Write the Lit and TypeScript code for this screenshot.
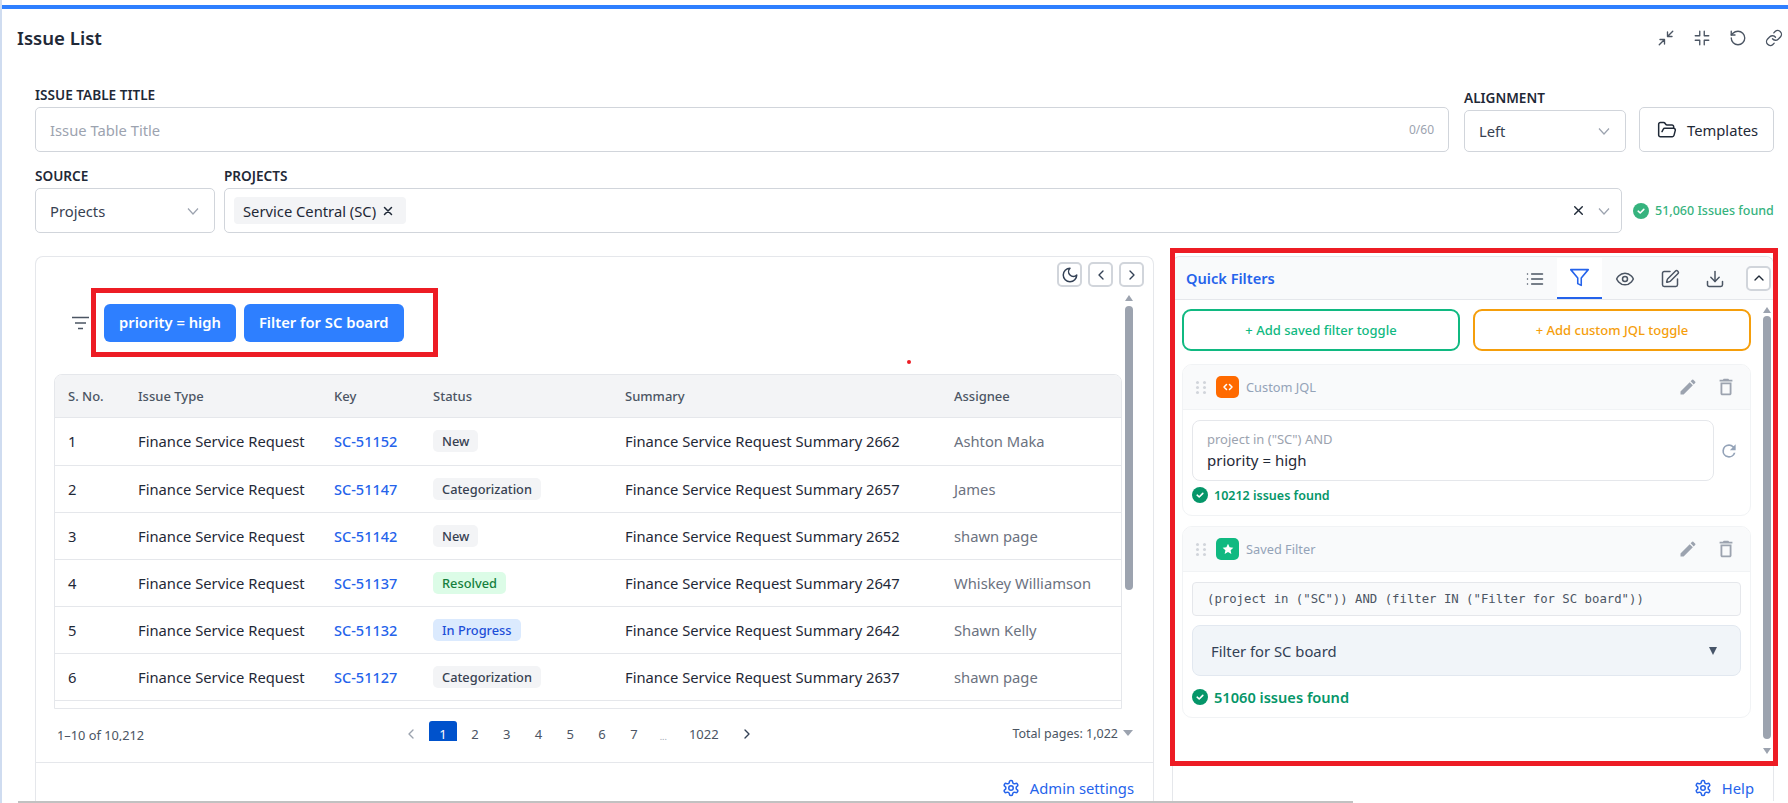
import { LitElement, html, css, svg } from 'lit';
import { customElement } from 'lit/decorators.js';

type Status = 'new' | 'cat' | 'res' | 'prog';

interface Row {
  type: string;
  key: string;
  status: string;
  kind: Status;
  summary: string;
  assignee: string;
}

const ROWS: Row[] = [
  { type: 'Finance Service Request', key: 'SC-51152', status: 'New', kind: 'new', summary: 'Finance Service Request Summary 2662', assignee: 'Ashton Maka' },
  { type: 'Finance Service Request', key: 'SC-51147', status: 'Categorization', kind: 'cat', summary: 'Finance Service Request Summary 2657', assignee: 'James' },
  { type: 'Finance Service Request', key: 'SC-51142', status: 'New', kind: 'new', summary: 'Finance Service Request Summary 2652', assignee: 'shawn page' },
  { type: 'Finance Service Request', key: 'SC-51137', status: 'Resolved', kind: 'res', summary: 'Finance Service Request Summary 2647', assignee: 'Whiskey Williamson' },
  { type: 'Finance Service Request', key: 'SC-51132', status: 'In Progress', kind: 'prog', summary: 'Finance Service Request Summary 2642', assignee: 'Shawn Kelly' },
  { type: 'Finance Service Request', key: 'SC-51127', status: 'Categorization', kind: 'cat', summary: 'Finance Service Request Summary 2637', assignee: 'shawn page' },
];

/** Stroke icon on a 24 unit box */
const icon = (size: number, body: unknown, width = 2) => html`<svg
  width=${size}
  height=${size}
  viewBox="0 0 24 24"
  fill="none"
  stroke="currentColor"
  stroke-width=${width}
  stroke-linecap="round"
  stroke-linejoin="round"
>${body}</svg>`;

const chevronDown = () => html`<svg class="chev" width="14" height="14" viewBox="0 0 14 14" fill="none" stroke="currentColor" stroke-width="1.2"><path d="M2 4.5 7 10l5-5.5" /></svg>`;

const gear = svg`<path d="M12.22 2h-.44a2 2 0 0 0-2 2v.18a2 2 0 0 1-1 1.73l-.43.25a2 2 0 0 1-2 0l-.15-.08a2 2 0 0 0-2.73.73l-.22.38a2 2 0 0 0 .73 2.73l.15.1a2 2 0 0 1 1 1.72v.51a2 2 0 0 1-1 1.74l-.15.09a2 2 0 0 0-.73 2.73l.22.38a2 2 0 0 0 2.73.73l.15-.08a2 2 0 0 1 2 0l.43.25a2 2 0 0 1 1 1.73V20a2 2 0 0 0 2 2h.44a2 2 0 0 0 2-2v-.18a2 2 0 0 1 1-1.73l.43-.25a2 2 0 0 1 2 0l.15.08a2 2 0 0 0 2.73-.73l.22-.39a2 2 0 0 0-.73-2.73l-.15-.08a2 2 0 0 1-1-1.74v-.5a2 2 0 0 1 1-1.74l.15-.09a2 2 0 0 0 .73-2.73l-.22-.38a2 2 0 0 0-2.73-.73l-.15.08a2 2 0 0 1-2 0l-.43-.25a2 2 0 0 1-1-1.73V4a2 2 0 0 0-2-2z" /><circle cx="12" cy="12" r="3" />`;

const check = (color: string) => html`<svg class="check" width="16" height="16" viewBox="0 0 16 16">
  <circle cx="8" cy="8" r="8" fill=${color} />
  <path d="M5.2 8.2 7.2 10l3.6-3.6" fill="none" stroke="#fff" stroke-width="1.6" stroke-linecap="round" stroke-linejoin="round" />
</svg>`;

const scrollbar = (thumb: number) => html`<div class="scrollbar">
  <i class="arrow up"></i>
  <i class="thumb" style="height:${thumb}px"></i>
</div>`;

@customElement('app-root')
export class AppRoot extends LitElement {
  static override styles = css`
    :host {
      display: block;
      width: 1788px;
      height: 803px;
      overflow: hidden;
      font-family: 'Noto Sans', sans-serif;
      font-size: 14.75px;
      color: #1f2937;
      background: #fff;
    }
    * {
      box-sizing: border-box;
    }
    svg {
      display: block;
      flex: none;
    }
    .page {
      height: 803px;
      display: flex;
      flex-direction: column;
      padding-top: 5px;
      border-left: 2px solid #cfdcf0;
    }
    .accent {
      height: 4px;
      flex: none;
      background: #2e7fff;
    }
    .header {
      height: 58px;
      flex: none;
      display: flex;
      align-items: center;
      justify-content: space-between;
      padding: 0 5px 0 15px;
    }
    .title {
      padding-bottom: 2px;
      font-size: 18.6px;
      font-weight: 600;
      color: #1f2937;
    }
    .header-actions {
      display: flex;
      gap: 18px;
      color: #4b5563;
    }
    .form {
      flex: none;
      margin-top: 20px;
      padding: 0 14px 0 33px;
      display: flex;
      flex-direction: column;
      gap: 16px;
    }
    .form-row {
      display: flex;
      align-items: flex-end;
    }
    .field label {
      display: block;
      height: 16px;
      line-height: 16px;
      margin-bottom: 4px;
      font-size: 13.6px;
      font-weight: 600;
      color: #1f2937;
    }
    .control {
      display: flex;
      align-items: center;
      height: 45px;
      padding: 0 14px;
      border: 1px solid #d1d5db;
      border-radius: 5px;
      background: #fff;
      color: #374151;
    }
    .grow {
      flex: 1;
    }
    .placeholder {
      flex: 1;
      color: #9ca3af;
    }
    .counter {
      font-size: 12px;
      color: #9ca3af;
    }
    .chev {
      margin-left: auto;
      color: #9ca3af;
    }
    .alignment {
      width: 162px;
      margin-left: 15px;
    }
    .alignment .control {
      height: 42px;
    }
    .templates {
      width: 135px;
      margin-left: 13px;
      gap: 10px;
      padding-left: 17px;
      color: #1f2937;
    }
    .source {
      width: 180px;
    }
    .projects {
      width: 1398px;
      margin-left: 9px;
    }
    .projects .control {
      padding: 0 10px 0 9px;
    }
    .tag {
      display: flex;
      align-items: center;
      gap: 6px;
      height: 27px;
      padding: 0 12px 0 9px;
      border-radius: 4px;
      background: #f3f4f6;
      color: #1f2937;
    }
    .clear {
      margin-left: auto;
      margin-right: 12px;
      color: #1f2937;
    }
    .projects .chev {
      margin-left: 0;
    }
    .found-top {
      margin-left: 11px;
      height: 45px;
      display: flex;
      align-items: center;
      gap: 6px;
      font-size: 12.5px;
      font-weight: 500;
      white-space: nowrap;
      color: #36b37e;
    }
    .content {
      flex: 1;
      min-height: 0;
      margin: 23px 14px 0 33px;
      display: flex;
      gap: 18px;
    }
    .card {
      display: flex;
      flex-direction: column;
      border: 1px solid #e5e7eb;
      border-bottom: 0;
      border-radius: 8px 8px 0 0;
    }
    .left {
      width: 1119px;
      flex: none;
    }
    .toolbar {
      height: 31px;
      flex: none;
      display: flex;
      justify-content: flex-end;
      gap: 6px;
      padding: 5px 9px 0 0;
    }
    .mini {
      width: 25px;
      height: 25px;
      display: flex;
      align-items: center;
      justify-content: center;
      border: 2px solid #d1d5db;
      border-radius: 5px;
      background: #fff;
      color: #334155;
    }
    .scroll-row {
      display: flex;
      height: 421px;
      flex: none;
    }
    .scroll-content {
      width: 1086px;
      flex: none;
    }
    .chips-row {
      position: relative;
      display: flex;
      align-items: center;
      height: 69px;
      padding-left: 36px;
    }
    .chips-icon {
      width: 17px;
      flex: none;
      color: #4b5563;
    }
    .annot {
      border: 5px solid #ed1c24;
    }
    .chips {
      width: 347px;
      height: 69px;
      flex: none;
      margin-left: 2px;
      display: flex;
      gap: 8px;
      padding: 11px 0 0 8px;
    }
    .chip {
      height: 38px;
      line-height: 37px;
      padding: 0 15px;
      border-radius: 6px;
      background: #2e7fff;
      color: #fff;
      font-size: 14.75px;
      font-weight: 600;
      white-space: nowrap;
    }
    .dot {
      position: absolute;
      left: 871px;
      top: 72px;
      width: 4px;
      height: 4px;
      border-radius: 50%;
      background: #ed1c24;
    }
    .table-wrap {
      width: 1068px;
      height: 335px;
      margin: 17px 0 0 18px;
      border: 1px solid #e5e7eb;
      border-radius: 8px 8px 0 0;
      overflow: hidden;
    }
    table {
      width: 1066px;
      table-layout: fixed;
      border-collapse: collapse;
    }
    th {
      height: 42px;
      padding: 0 13px;
      text-align: left;
      font-size: 13px;
      font-weight: 500;
      color: #4b5563;
      background: #f3f4f6;
      border-bottom: 1px solid #e5e7eb;
    }
    td {
      height: 47px;
      padding: 0 13px;
      white-space: nowrap;
      border-bottom: 1px solid #e5e7eb;
    }
    tr:first-child td {
      height: 48px;
    }
    .key {
      color: #2563eb;
      font-size: 14.5px;
      font-weight: 500;
    }
    .assignee {
      color: #6b7280;
    }
    .pill {
      display: inline-block;
      height: 22px;
      line-height: 22px;
      padding: 0 9px;
      border-radius: 5px;
      font-size: 12.8px;
      font-weight: 500;
    }
    .pill.new,
    .pill.cat {
      background: #f3f4f6;
      color: #374151;
    }
    .pill.res {
      background: #dcfce7;
      color: #15803d;
    }
    .pill.prog {
      background: #dbeafe;
      color: #1d4ed8;
    }
    .scrollbar {
      width: 8px;
      margin: 7px 0 0 3px;
      display: flex;
      flex-direction: column;
      align-items: center;
      gap: 5px;
    }
    .arrow {
      width: 0;
      height: 0;
      flex: none;
      border-left: 4.5px solid transparent;
      border-right: 4.5px solid transparent;
    }
    .arrow.up {
      border-bottom: 6px solid #9ca3af;
    }
    .thumb {
      display: block;
      width: 8px;
      flex: none;
      border-radius: 4px;
      background: #9ca3af;
    }
    .panel-bar {
      flex: none;
    }
    .panel-arrow {
      display: block;
      width: 0;
      height: 0;
      margin: 3px 0 0 12px;
      border-left: 4.5px solid transparent;
      border-right: 4.5px solid transparent;
      border-top: 6px solid #9ca3af;
    }
    .pagination {
      height: 32px;
      flex: none;
      overflow: hidden;
      display: flex;
      padding: 12px 20px 0 21px;
      font-size: 13px;
      color: #4b5563;
    }
    .range {
      width: 337px;
      flex: none;
      font-size: 12.8px;
      line-height: 28px;
    }
    .pager {
      display: flex;
      height: 26px;
      align-items: center;
    }
    .pager span {
      flex: none;
      display: flex;
      align-items: center;
      justify-content: center;
      width: 31.8px;
      height: 26px;
    }
    .pager .nav {
      width: 33px;
      color: #9ca3af;
    }
    .pager .nav.next {
      width: 32px;
      color: #334155;
    }
    .pager .current {
      width: 28px;
      margin: 0 2px;
      border-radius: 3px 3px 0 0;
      background: #0052cc;
      color: #fff;
    }
    .pager .gap {
      width: 27px;
      font-size: 9px;
      padding-top: 5px;
      color: #9ca3af;
    }
    .pager .last {
      width: 54px;
    }
    .total {
      margin-left: auto;
      display: flex;
      gap: 5px;
      line-height: 26px;
      font-size: 12.5px;
    }
    .total i {
      width: 0;
      height: 0;
      margin-top: 9px;
      border-left: 5px solid transparent;
      border-right: 5px solid transparent;
      border-top: 6px solid #9ca3af;
    }
    .spacer {
      flex: 1;
    }
    .footer {
      height: 39px;
      flex: none;
      display: flex;
      justify-content: flex-end;
      align-items: flex-start;
      gap: 10px;
      padding: 15px 19px 0 0;
      line-height: 20px;
      border-top: 1px solid #e5e7eb;
      color: #2563eb;
    }
    .footer svg {
      margin-top: 1px;
    }
    .right {
      position: relative;
      flex: 1;
    }
    .panel-annot {
      position: absolute;
      left: -3px;
      top: -9px;
      right: -5px;
      height: 518px;
      pointer-events: none;
    }
    .panel-head {
      height: 43px;
      flex: none;
      display: flex;
      align-items: center;
      padding-left: 13px;
      background: #f9fafb;
      border-bottom: 1px solid #e5e7eb;
      border-radius: 8px 8px 0 0;
    }
    .panel-title {
      margin-right: auto;
      font-size: 14.6px;
      font-weight: 600;
      color: #2563eb;
    }
    .tab {
      width: 45px;
      align-self: stretch;
      margin-top: 1px;
      display: flex;
      align-items: center;
      justify-content: center;
      color: #4b5563;
    }
    .tab.active {
      background: #fff;
      color: #2563eb;
      border-bottom: 2px solid #2563eb;
    }
    .collapse {
      margin: 0 2px 0 9px;
      color: #1f2937;
    }
    .panel-body {
      display: flex;
      height: 462px;
      flex: none;
    }
    .panel-content {
      width: 578px;
      flex: none;
      padding: 9px 0 0 9px;
    }
    .panel-body .scrollbar {
      margin: 7px 0 0 12px;
      height: 438px;
      gap: 3px;
    }
    .add-row {
      display: flex;
      gap: 13px;
      margin-bottom: 13px;
    }
    .add {
      flex: 1;
      height: 42px;
      display: flex;
      align-items: center;
      justify-content: center;
      border: 2px solid;
      border-radius: 9px;
      font-size: 13px;
      font-weight: 500;
    }
    .add.saved {
      border-color: #10b981;
      color: #10b981;
    }
    .add.custom {
      border-color: #f59e0b;
      color: #f59e0b;
    }
    .toggle {
      margin-bottom: 10px;
      border: 1px solid #f1f3f5;
      border-radius: 10px;
      overflow: hidden;
    }
    .toggle-head {
      height: 45px;
      display: flex;
      align-items: center;
      padding: 0 13px;
      background: #f9fafb;
      border-bottom: 1px solid #f1f3f5;
      color: #9ca3af;
    }
    .grip {
      display: grid;
      grid-template-columns: 3px 3px;
      gap: 2px 4px;
      margin-right: 10px;
    }
    .grip i {
      width: 3px;
      height: 3px;
      border-radius: 50%;
      background: #d1d5db;
    }
    .badge {
      width: 23px;
      height: 22px;
      display: flex;
      align-items: center;
      justify-content: center;
      margin-right: 7px;
      border-radius: 5px;
      color: #fff;
    }
    .badge.orange {
      background: #ff6a00;
    }
    .badge.green {
      background: #10b981;
    }
    .toggle-name {
      margin-right: auto;
      font-size: 12.8px;
      color: #94a3b8;
    }
    .toggle-actions {
      display: flex;
      align-items: center;
      gap: 17px;
    }
    .toggle-body {
      padding: 10px 9px;
    }
    .jql-row {
      display: flex;
      align-items: center;
    }
    .jql {
      width: 522px;
      height: 61px;
      padding: 8px 14px;
      border: 1px solid #e5e7eb;
      border-radius: 8px;
    }
    .jql small {
      display: block;
      height: 20px;
      line-height: 20px;
      font-size: 13px;
      color: #9ca3af;
    }
    .jql span {
      display: block;
      line-height: 22px;
      font-size: 15px;
      color: #1f2937;
    }
    .refresh {
      margin-left: 5px;
      color: #94a3b8;
    }
    .found {
      display: flex;
      align-items: center;
      gap: 6px;
      height: 20px;
      margin-top: 4px;
      font-size: 12.5px;
      font-weight: 600;
      color: #059669;
    }
    .found.large {
      margin-top: 11px;
      font-size: 14.6px;
    }
    .code {
      height: 34px;
      line-height: 32px;
      padding: 0 14px;
      border: 1px solid #e5e7eb;
      border-radius: 4px;
      background: #f9fafb;
      font-family: 'DejaVu Sans Mono', monospace;
      font-size: 12.3px;
      color: #4b5563;
      white-space: pre;
    }
    .filter-select {
      height: 51px;
      margin-top: 9px;
      display: flex;
      align-items: center;
      justify-content: space-between;
      padding: 0 23px 0 18px;
      border: 1px solid #e2e8f0;
      border-radius: 8px;
      background: #f1f5f9;
      font-size: 14.8px;
      color: #334155;
    }
    .filter-select i {
      width: 0;
      height: 0;
      border-left: 4.5px solid transparent;
      border-right: 4.5px solid transparent;
      border-top: 8px solid #475569;
    }
    .hscroll {
      height: 2px;
      flex: none;
      margin-left: 16px;
      width: 1335px;
      background: #c1c1c1;
    }
  `;

  private toggleHead(name: string, badge: unknown, tone: string) {
    return html`<div class="toggle-head">
      <div class="grip"><i></i><i></i><i></i><i></i><i></i><i></i></div>
      <div class="badge ${tone}">${badge}</div>
      <div class="toggle-name">${name}</div>
      <div class="toggle-actions">
        <svg width="20" height="20" viewBox="0 0 24 24" fill="currentColor">
          <path d="M3 17.25V21h3.75L17.81 9.94l-3.75-3.75L3 17.25zM20.71 7.04a1 1 0 0 0 0-1.41l-2.34-2.34a1 1 0 0 0-1.41 0l-1.83 1.83 3.75 3.75 1.83-1.83z" />
        </svg>
        <svg width="22" height="22" viewBox="0 0 24 24" fill="currentColor">
          <path d="M6 19c0 1.1.9 2 2 2h8c1.1 0 2-.9 2-2V7H6v12zM8 9h8v10H8V9zm7.5-5l-1-1h-5l-1 1H5v2h14V4z" />
        </svg>
      </div>
    </div>`;
  }

  private renderTable() {
    return html`<div class="table-wrap">
      <table>
        <colgroup>
          <col style="width:70px" />
          <col style="width:196px" />
          <col style="width:99px" />
          <col style="width:192px" />
          <col style="width:329px" />
          <col style="width:180px" />
        </colgroup>
        <thead>
          <tr>
            <th>S. No.</th>
            <th>Issue Type</th>
            <th>Key</th>
            <th>Status</th>
            <th>Summary</th>
            <th>Assignee</th>
          </tr>
        </thead>
        <tbody>
          ${ROWS.map(
            (r, i) => html`<tr>
              <td>${i + 1}</td>
              <td>${r.type}</td>
              <td class="key">${r.key}</td>
              <td><span class="pill ${r.kind}">${r.status}</span></td>
              <td>${r.summary}</td>
              <td class="assignee">${r.assignee}</td>
            </tr>`,
          )}
        </tbody>
      </table>
    </div>`;
  }

  private renderLeft() {
    return html`<section class="card left">
      <div class="toolbar">
        <div class="mini">${icon(18, svg`<path d="M12 3a6 6 0 0 0 9 9 9 9 0 1 1-9-9Z" />`)}</div>
        <div class="mini">${icon(16, svg`<path d="m15 18-6-6 6-6" />`)}</div>
        <div class="mini">${icon(16, svg`<path d="m9 18 6-6-6-6" />`)}</div>
      </div>
      <div class="scroll-row">
        <div class="scroll-content">
          <div class="chips-row">
            <svg class="chips-icon" width="17" height="14" viewBox="0 0 17 14" fill="none" stroke="currentColor" stroke-width="1.4">
              <path d="M0 1.5h17M3 7h11M6 12.5h5" />
            </svg>
            <div class="chips annot">
              <div class="chip">priority = high</div>
              <div class="chip">Filter for SC board</div>
            </div>
            <i class="dot"></i>
          </div>
          ${this.renderTable()}
        </div>
        ${scrollbar(284)}
      </div>
      <div class="pagination">
        <div class="range">1–10 of 10,212</div>
        <div class="pager">
          <span class="nav">${icon(16, svg`<path d="m15 18-6-6 6-6" />`)}</span>
          <span class="current">1</span>
          ${['2', '3', '4', '5', '6', '7'].map((n) => html`<span>${n}</span>`)}
          <span class="gap">...</span>
          <span class="last">1022</span>
          <span class="nav next">${icon(16, svg`<path d="m9 18 6-6-6-6" />`)}</span>
        </div>
        <div class="total">Total pages: 1,022 <i></i></div>
      </div>
      <div class="spacer"></div>
      <div class="footer">${icon(18, gear)} Admin settings</div>
    </section>`;
  }

  private renderRight() {
    return html`<section class="card right">
      <div class="panel-head">
        <div class="panel-title">Quick Filters</div>
        <div class="tab">${icon(20, svg`<path d="M8 6h13M8 12h13M8 18h13M3 6h.01M3 12h.01M3 18h.01" />`, 1.8)}</div>
        <div class="tab active">${icon(21, svg`<path d="M22 3H2l8 9.46V19l4 2v-8.54L22 3z" />`, 1.8)}</div>
        <div class="tab">${icon(20, svg`<path d="M2 12s3-7 10-7 10 7 10 7-3 7-10 7-10-7-10-7Z" /><circle cx="12" cy="12" r="3" />`, 1.8)}</div>
        <div class="tab">${icon(20, svg`<path d="M12 3H5a2 2 0 0 0-2 2v14a2 2 0 0 0 2 2h14a2 2 0 0 0 2-2v-7" /><path d="M18.375 2.625a1 1 0 0 1 3 3l-9.013 9.014a2 2 0 0 1-.853.505l-2.873.84a.5.5 0 0 1-.62-.62l.84-2.873a2 2 0 0 1 .506-.852z" />`, 1.8)}</div>
        <div class="tab">${icon(20, svg`<path d="M21 15v4a2 2 0 0 1-2 2H5a2 2 0 0 1-2-2v-4" /><path d="m7 10 5 5 5-5" /><path d="M12 15V3" />`, 1.8)}</div>
        <div class="mini collapse">${icon(16, svg`<path d="m18 15-6-6-6 6" />`)}</div>
      </div>
      <div class="panel-body">
        <div class="panel-content">
          <div class="add-row">
            <div class="add saved">+ Add saved filter toggle</div>
            <div class="add custom">+ Add custom JQL toggle</div>
          </div>
          <div class="toggle">
            ${this.toggleHead('Custom JQL', icon(12, svg`<path d="m9 7-5 5 5 5M15 7l5 5-5 5" />`, 3), 'orange')}
            <div class="toggle-body">
              <div class="jql-row">
                <div class="jql">
                  <small>project in ("SC") AND</small>
                  <span>priority = high</span>
                </div>
                <svg class="refresh" width="20" height="20" viewBox="0 0 24 24" fill="currentColor">
                  <path d="M17.65 6.35A7.95 7.95 0 0 0 12 4a8 8 0 1 0 7.73 10h-2.08A6 6 0 1 1 12 6c1.66 0 3.14.69 4.22 1.78L13 11h7V4l-2.35 2.35z" />
                </svg>
              </div>
              <div class="found">${check('#059669')} 10212 issues found</div>
            </div>
          </div>
          <div class="toggle">
            ${this.toggleHead(
              'Saved Filter',
              html`<svg width="12" height="12" viewBox="0 0 24 24" fill="currentColor"><path d="m12 1.5 3.2 6.9 7.5.9-5.5 5.1 1.5 7.4-6.7-3.7-6.7 3.7 1.5-7.4L1.3 9.3l7.5-.9z" /></svg>`,
              'green',
            )}
            <div class="toggle-body">
              <div class="code">(project in ("SC")) AND (filter IN ("Filter for SC board"))</div>
              <div class="filter-select">Filter for SC board <i></i></div>
              <div class="found large">${check('#059669')} 51060 issues found</div>
            </div>
          </div>
        </div>
        <div class="panel-bar">
          ${scrollbar(423)}
          <i class="panel-arrow"></i>
        </div>
      </div>
      <div class="footer">${icon(18, gear)} Help</div>
      <div class="panel-annot annot"></div>
    </section>`;
  }

  override render() {
    return html`<div class="page">
      <div class="accent"></div>
      <header class="header">
        <div class="title">Issue List</div>
        <div class="header-actions">
          ${icon(18, svg`<path d="M4 14h6v6M20 10h-6V4M14 10l7-7M3 21l7-7" />`, 1.8)}
          ${icon(18, svg`<path d="M9 3v6H3M21 9h-6V3M3 15h6v6M15 21v-6h6" />`, 1.8)}
          ${icon(18, svg`<path d="M3 12a9 9 0 1 0 9-9 9.75 9.75 0 0 0-6.74 2.74L3 8" /><path d="M3 3v5h5" />`, 1.8)}
          ${icon(18, svg`<path d="M10 13a5 5 0 0 0 7.54.54l3-3a5 5 0 0 0-7.07-7.07l-1.72 1.71" /><path d="M14 11a5 5 0 0 0-7.54-.54l-3 3a5 5 0 0 0 7.07 7.07l1.71-1.71" />`, 1.8)}
        </div>
      </header>
      <div class="form">
        <div class="form-row">
          <div class="field grow">
            <label>ISSUE TABLE TITLE</label>
            <div class="control">
              <span class="placeholder">Issue Table Title</span>
              <span class="counter">0/60</span>
            </div>
          </div>
          <div class="field alignment">
            <label>ALIGNMENT</label>
            <div class="control">Left ${chevronDown()}</div>
          </div>
          <div class="control templates">
            ${icon(20, svg`<path d="m6 14 1.5-2.9A2 2 0 0 1 9.24 10H20a2 2 0 0 1 1.94 2.5l-1.54 6a2 2 0 0 1-1.95 1.5H4a2 2 0 0 1-2-2V5a2 2 0 0 1 2-2h3.9a2 2 0 0 1 1.69.9l.81 1.2a2 2 0 0 0 1.69.9H18a2 2 0 0 1 2 2v2" />`, 1.8)}
            Templates
          </div>
        </div>
        <div class="form-row">
          <div class="field source">
            <label>SOURCE</label>
            <div class="control">Projects ${chevronDown()}</div>
          </div>
          <div class="field projects">
            <label>PROJECTS</label>
            <div class="control">
              <div class="tag">
                Service Central (SC)
                ${icon(12, svg`<path d="M5 5l14 14M19 5 5 19" />`, 3)}
              </div>
              <span class="clear">${icon(13, svg`<path d="M5 5l14 14M19 5 5 19" />`, 2.6)}</span>
              ${chevronDown()}
            </div>
          </div>
          <div class="found-top">${check('#36b37e')} 51,060 Issues found</div>
        </div>
      </div>
      <main class="content">${this.renderLeft()} ${this.renderRight()}</main>
      <div class="hscroll"></div>
    </div>`;
  }
}
